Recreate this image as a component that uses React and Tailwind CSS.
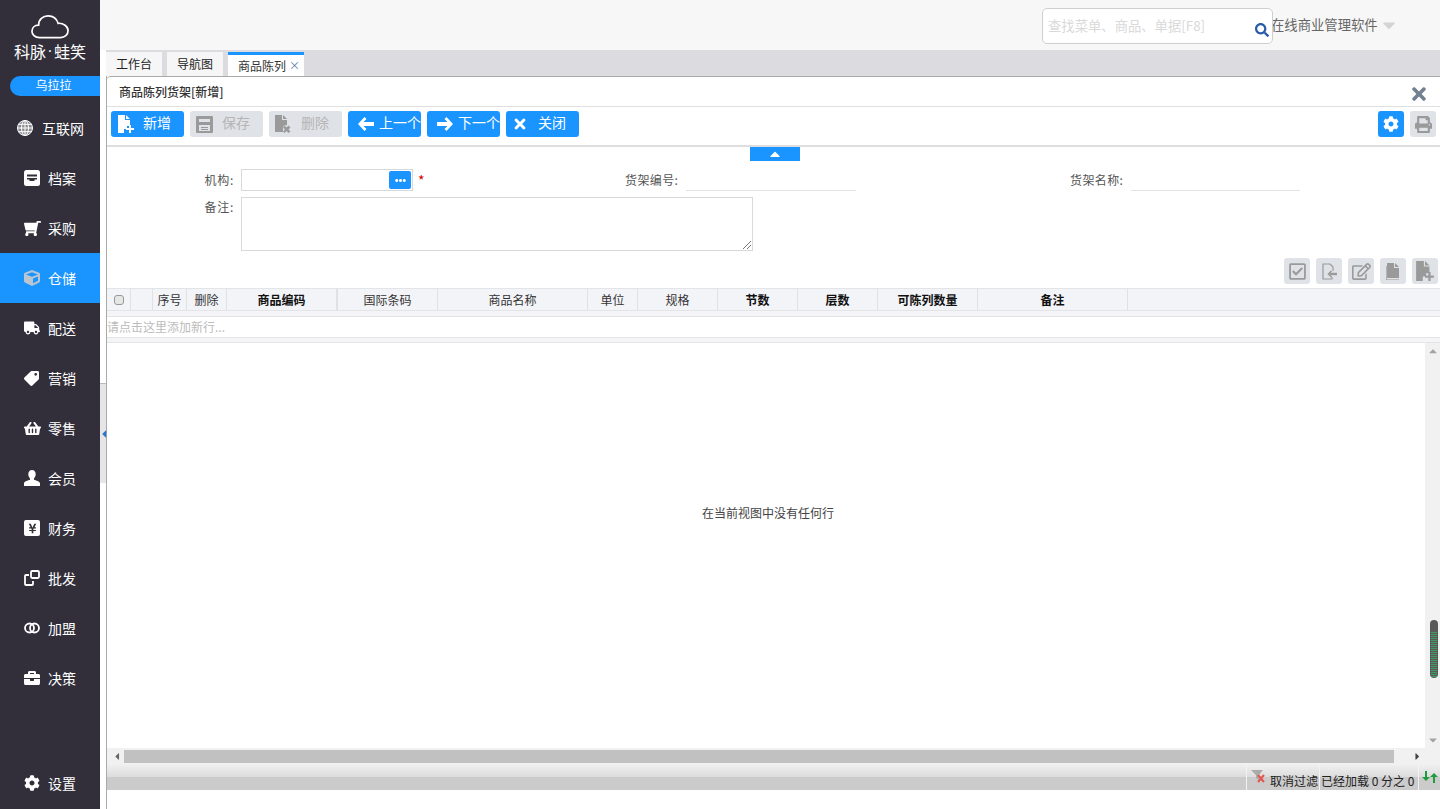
import React from "react";
import {
  FaShoppingCart, FaCube, FaTruck, FaTag, FaShoppingBasket, FaCog,
  FaBriefcase, FaTimes, FaPrint, FaRegCheckSquare, FaEllipsisH,
  FaRegEdit, FaSearch, FaYenSign, FaCaretDown, FaCaretUp, FaCaretLeft, FaCaretRight,
} from "react-icons/fa";

const font = { fontFamily: '"Noto Sans CJK SC", "Liberation Sans", sans-serif' };

const FilePlus = ({ color = "currentColor", size = 18 }) => (
  <svg width={size} height={size} viewBox="0 0 18 18" fill={color}>
    <path d="M1 0h7v5h5v6h-3v3H7v4H1z" />
    <path d="M9 0l4 4H9z" />
    <path d="M12 10h2v3h3v2h-3v3h-2v-3H9v-2h3z" />
  </svg>
);

const FileX = ({ color = "currentColor", size = 18 }) => (
  <svg width={size} height={size} viewBox="0 0 18 18" fill={color}>
    <path d="M1 0h7v5h5v5l-4 1v6H1z" />
    <path d="M9 0l4 4H9z" />
    <path d="M10.5 10.5l2 2 2-2 2 2-2 2 2 2-2 1.5-2-2-2 2-1.5-1.5 2-2-2-2z" />
  </svg>
);

const SaveIcon = () => (
  <svg width="17" height="17" viewBox="0 0 17 17" fill="#9a9a9a">
    <path fillRule="evenodd" d="M1 0h15a1 1 0 0 1 1 1v15a1 1 0 0 1-1 1H1a1 1 0 0 1-1-1V1a1 1 0 0 1 1-1zM3 3v3h11V3zM3 9v6h11V9z" />
    <path d="M5 11h7v1H5zM5 13h7v1H5z" />
  </svg>
);

const Arrow = ({ flip }) => (
  <svg width="16" height="14" viewBox="0 0 16 14" fill="#fff" className={flip ? "-scale-x-100" : ""}>
    <path d="M0 7l6.500-7 2 2L5.500 5H16v4H5.500l3 3-2 2z" />
  </svg>
);

const FileCopy = () => (
  <svg width="14" height="17" viewBox="0 0 14 17" fill="#9a9a9a">
    <path d="M1 0h7v5h5v10H1z" />
    <path d="M9 0l4 4H9z" />
    <path d="M0 3h.6v13.4H13v.6H0z" />
  </svg>
);

const FileBack = () => (
  <svg width="17" height="17" viewBox="0 0 17 17" fill="none" stroke="#9a9a9a" strokeWidth="1.2">
    <path d="M9 1H2v15h9v-2" />
    <path d="M9 1l3 3v4" />
    <path d="M16 11H9" strokeWidth="2.4" />
    <path d="M10.5 8l-3 3 3 3" strokeWidth="1.6" />
  </svg>
);

const CloudLogo = () => (
  <svg width="38" height="24" viewBox="0 0 40 26" fill="none" stroke="#fff" strokeWidth="1.8" preserveAspectRatio="none">
    <path d="M9 24.500C4 24.500 1 21 1 17.500C1 13.500 4 11 8 11C8 5 12.500 1 18 1C23 1 27 4 28.500 9C34 8.500 39 12.500 39 17C39 21.500 35.500 24.500 31 24.500Z" />
  </svg>
);

const GlobeIcon = () => (
  <svg width="16" height="16" viewBox="0 0 16 16" fill="none" stroke="#fff" strokeWidth="1">
    <circle cx="8" cy="8" r="7.500" fill="#8d8b92" />
    <ellipse cx="8" cy="8" rx="3.500" ry="7.500" />
    <path d="M8 0v16M.5 8h15M1.500 4.300h13M1.500 11.700h13" />
  </svg>
);

const UserIcon = () => (
  <svg width="16" height="16" viewBox="0 0 16 16" fill="#fff">
    <path d="M8 0c2.300 0 3.700 1.800 3.700 4.200 0 1.700-.7 3.200-1.700 4.200v1.300c1.800.7 6 1.400 6 3.800V16H0v-2.500c0-2.400 4.200-3.100 6-3.800V8.400C5 7.400 4.300 5.900 4.300 4.200 4.300 1.800 5.700 0 8 0z" />
  </svg>
);

const navItems = [
  { label: "档案", icon: <svg width="16" height="16" viewBox="0 0 16 16"><rect width="16" height="16" rx="2.500" fill="#fff" /><path d="M3 4.500h10v2H3zM3 8h10v1.500h-2.500V11h-5V9.500H3z" fill="#322f3b" /></svg> },
  { label: "采购", icon: <FaShoppingCart size={17} className="-scale-x-100" /> },
  { label: "仓储", icon: <FaCube size={16} className="text-[#b9c6d2]" />, active: true },
  { label: "配送", icon: <FaTruck size={16} /> },
  { label: "营销", icon: <FaTag size={15} className="-scale-x-100" /> },
  { label: "零售", icon: <FaShoppingBasket size={17} /> },
  { label: "会员", icon: <UserIcon /> },
  { label: "财务", icon: <span className="flex h-4 w-4 items-center justify-center rounded-[2px] bg-white text-[#322f3b]"><FaYenSign size={11} /></span> },
  { label: "批发", icon: <svg width="16" height="16" viewBox="0 0 16 16" fill="none" stroke="#fff" strokeWidth="1.800"><rect x="7" y="1" width="8" height="7" rx="1.200" /><path d="M5 5H2a1 1 0 0 0-1 1v8a1 1 0 0 0 1 1h6a1 1 0 0 0 1-1v-3" /></svg> },
  { label: "加盟", icon: <svg width="16" height="12" viewBox="0 0 16 12" fill="none" stroke="#fff" strokeWidth="1.800"><circle cx="5.500" cy="6" r="4.500" /><circle cx="10.500" cy="6" r="4.500" /></svg> },
  { label: "决策", icon: <FaBriefcase size={16} /> },
];

const columns = [
  { w: "w-[24px]", check: true },
  { w: "w-[22px]" },
  { w: "w-[34px]", label: "序号" },
  { w: "w-[40px]", label: "删除" },
  { w: "w-[111px]", label: "商品编码", bold: true, thick: true },
  { w: "w-[100px]", label: "国际条码" },
  { w: "w-[150px]", label: "商品名称" },
  { w: "w-[50px]", label: "单位" },
  { w: "w-[80px]", label: "规格" },
  { w: "w-[80px]", label: "节数", bold: true },
  { w: "w-[80px]", label: "层数", bold: true },
  { w: "w-[100px]", label: "可陈列数量", bold: true },
  { w: "w-[150px]", label: "备注", bold: true },
];

function NavRow({ item }) {
  return (
    <div className={`flex h-[50px] items-center pl-6 text-[14px] text-white ${item.active ? "bg-[#1a94ff]" : ""}`}>
      <span className="flex w-[24px] shrink-0 justify-start">{item.icon}</span>
      <span>{item.label}</span>
    </div>
  );
}

function ToolButton({ icon, label, gap = "gap-[8px]", pl = "pl-[4px]", disabled }) {
  return (
    <div className={`flex h-[26px] w-[73px] items-center overflow-hidden whitespace-nowrap rounded-[3px] text-[14px] ${pl} ${gap} ${disabled ? "bg-[#dfe2e6] text-[#b5b5b5]" : "bg-[#1a94ff] text-white"}`}>
      <span className="flex w-[20px] shrink-0 justify-center">{icon}</span>
      <span className="pb-[3px]">{label}</span>
    </div>
  );
}

function GridTool({ children }) {
  return <div className="flex h-[26px] w-[26px] items-center justify-center rounded-[3px] bg-[#dfe2e6] text-[#9a9a9a]">{children}</div>;
}

export default function App() {
  return (
    <div className="flex h-[809px] w-[1440px] overflow-hidden bg-white text-[12px] text-[#333]" style={font}>
      <aside className="flex w-[100px] shrink-0 flex-col bg-[#322f3b]">
        <div className="flex h-[76px] flex-col items-center pt-[15px]">
          <CloudLogo />
          <div className="mt-[2px] flex items-center text-[16px] leading-[20px] text-white">
            <span>科脉</span>
            <span className="w-[8px] text-center" style={{ fontFamily: '"Liberation Sans", sans-serif' }}>·</span>
            <span>蛙笑</span>
          </div>
        </div>
        <div className="ml-[10px] flex h-[20px] items-center justify-center rounded-l-full bg-[#1a94ff] pb-[3px] pr-[3px] text-[12px] text-white">乌拉拉</div>
        <div className="mt-[7px] flex h-[50px] items-center pl-[17px] text-[14px] text-white">
          <span className="mr-[9px]"><GlobeIcon /></span>
          <span>互联网</span>
        </div>
        {navItems.map((item) => <NavRow key={item.label} item={item} />)}
        <div className="mt-auto pb-[1px]"><NavRow item={{ label: "设置", icon: <FaCog size={16} /> }} /></div>
      </aside>

      <div className="flex min-w-0 flex-1 flex-col">
        <header className="flex h-[50px] shrink-0 items-start bg-[#f7f7f7]">
          <div className="relative z-10 ml-[942px] mt-[8px] flex h-[36px] w-[231px] shrink-0 items-center justify-between rounded-[5px] border border-[#cfcfcf] bg-white pl-[5px] pr-[3px] text-[13.33px] text-[#d9d9d9]">
            <span className="whitespace-nowrap">查找菜单、商品、单据[F8]</span>
            <FaSearch size={14} className="mt-[8px] text-[#2b5aa8]" />
          </div>
          <div className="ml-[-2px] flex h-[50px] items-center overflow-hidden whitespace-nowrap text-[13.33px] text-[#666]">
            <span>在线商业管理软件</span>
            <FaCaretDown size={20} className="ml-[1px] text-[#d4d4d4]" />
          </div>
        </header>

        <div className="flex min-h-0 flex-1">
          <div className="w-[6px] shrink-0 pt-[333px]">
            <div className="relative h-[100px] border-t border-[#bbb] bg-[#e6e6e6]">
              <FaCaretLeft size={12} className="absolute left-[-2px] top-[44px] text-[#2e74c8]" />
            </div>
          </div>

          <div className="flex min-w-0 flex-1 flex-col">
            <nav className="flex h-[26px] shrink-0 items-end gap-[5px] bg-[#dcdce0]">
              <div className="flex h-[24px] w-[56px] items-center justify-center bg-[#f6f6f6] text-[#222]">工作台</div>
              <div className="flex h-[24px] w-[56px] items-center justify-center bg-[#f6f6f6] text-[#222]">导航图</div>
              <div className="flex h-[24px] w-[76px] items-center gap-[3px] border-t-[3px] border-[#1a94ff] bg-white pl-[10px] text-[#333]">
                <span>商品陈列</span>
                <span className="text-[11px] leading-none text-[#5b7ba8]">×</span>
              </div>
            </nav>

            <div className="flex h-[733px] flex-col border-l border-[#aaa]">
              <main className="flex h-[689px] shrink-0 flex-col rounded-tl-[4px] border-t border-[#a9a9a9] bg-white">
                <div className="flex h-[30px] shrink-0 items-center justify-between border-b border-[#e0e0e0] pl-[12px] pr-[11px]">
                  <span className="text-[12px] font-medium text-[#333]">商品陈列货架[新增]</span>
                  <FaTimes size={20} className="mt-[5px] text-[#72808f]" />
                </div>

                <div className="flex h-[40px] shrink-0 items-start justify-between border-b-2 border-[#dedede] pl-[4px] pr-[4px] pt-[4px]">
                  <div className="flex gap-[6px]">
                    <ToolButton icon={<FilePlus color="#fff" />} label="新增" pl="pl-[5px]" gap="gap-[7px]" />
                    <ToolButton icon={<SaveIcon />} label="保存" disabled />
                    <ToolButton icon={<FileX color="#9a9a9a" />} label="删除" disabled />
                    <ToolButton icon={<Arrow />} label="上一个" gap="gap-[3px]" pl="pl-[8px]" />
                    <ToolButton icon={<Arrow flip />} label="下一个" gap="gap-[3px]" pl="pl-[8px]" />
                    <ToolButton icon={<FaTimes size={16} />} label="关闭" />
                  </div>
                  <div className="flex gap-[6px]">
                    <div className="flex h-[26px] w-[26px] items-center justify-center rounded-[3px] bg-[#1a94ff] text-white"><FaCog size={16} /></div>
                    <div className="flex h-[26px] w-[26px] items-center justify-center rounded-[3px] bg-[#dfe2e6] text-[#999]"><FaPrint size={17} /></div>
                  </div>
                </div>

                <div className="relative h-[111px] shrink-0">
                  <div className="absolute left-[643px] top-0 flex h-[14px] w-[50px] items-center justify-center bg-[#1a94ff] text-white"><FaCaretUp size={16} /></div>
                  <div className="grid grid-cols-[127px_172px_1fr] gap-x-[7px] gap-y-[6px] pt-[22px]">
                    <div className="pt-[2px] text-right tracking-[0.7px] text-[#555]">机构:</div>
                    <div className="flex h-[22px] items-center justify-end border border-[#d9d9d9] pr-[1px]">
                      <div className="flex h-[18px] w-[22px] items-center justify-center rounded-[2px] bg-[#1a94ff] text-white"><FaEllipsisH size={11} /></div>
                    </div>
                    <div className="flex h-[22px] text-[#555]">
                      <span className="ml-[-2px] w-[207px] shrink-0 pt-[1px] text-[14px] text-[#d40000]">*</span>
                      <span className="w-[53px] shrink-0 whitespace-nowrap pt-[2px] tracking-[0.4px]">货架编号:</span>
                      <div className="ml-[8px] h-[22px] w-[170px] shrink-0 border-b border-[#e2e2e2]" />
                      <span className="ml-[214px] w-[53px] shrink-0 whitespace-nowrap pt-[2px] tracking-[0.4px]">货架名称:</span>
                      <div className="ml-[8px] h-[22px] w-[169px] shrink-0 border-b border-[#e2e2e2]" />
                    </div>
                    <div className="pt-[1px] text-right tracking-[0.7px] text-[#555]">备注:</div>
                    <div className="relative col-span-2 h-[54px] w-[512px] border border-[#d9d9d9]">
                      <svg className="absolute bottom-[1px] right-[1px]" width="8" height="8" viewBox="0 0 8 8" stroke="#777" fill="none"><path d="M8 0L0 8M8 4L4 8" /></svg>
                    </div>
                  </div>
                </div>

                <div className="flex h-[26px] shrink-0 justify-end gap-[6px] pr-[2px]">
                  <GridTool><FaRegCheckSquare size={19} /></GridTool>
                  <GridTool><FileBack /></GridTool>
                  <GridTool><FaRegEdit size={19} /></GridTool>
                  <GridTool><FileCopy /></GridTool>
                  <GridTool><FilePlus size={20} /></GridTool>
                </div>

                <div className="mt-[4px] flex h-[23px] shrink-0 border-y border-[#e3e4e8] bg-[#f3f4f8]">
                  {columns.map((c, i) => (
                    <div
                      key={i}
                      className={`flex shrink-0 items-center justify-center border-r border-[#e0e1e5] ${c.w} ${c.bold ? "font-bold text-[#111]" : "text-[#333]"} ${c.thick ? "border-r-2" : ""}`}
                    >
                      {c.check && <span className="h-[10px] w-[10px] rounded-[3px] border border-[#999] bg-[#e6e6e6]" />}
                      {c.label}
                    </div>
                  ))}
                </div>
                <div className="h-[5px] shrink-0 bg-[#f5f5f7]" />
                <div className="flex h-[22px] shrink-0 items-center border-y border-[#e3e4e8] text-[#bcbcbc]">请点击这里添加新行...</div>
                <div className="h-[5px] shrink-0 border-b border-[#e3e4e8] bg-[#f5f5f7]" />

                <div className="flex min-h-0 flex-1">
                  <div className="flex flex-1 items-center justify-center pb-[66px] pl-[4px] text-[#444]">在当前视图中没有任何行</div>
                  <div className="relative flex w-[15px] shrink-0 flex-col items-center bg-[#f1f1f1]">
                    <FaCaretUp size={12} className="mt-[2px] text-[#a3a3a3]" />
                    <div className="absolute left-[5px] top-[277px] h-[58px] w-[8px] rounded-full bg-[#595959] px-[1px] pb-[1px] pt-[12px]">
                      <div className="h-full w-full bg-[repeating-linear-gradient(to_bottom,#3c9c63_0,#3c9c63_1px,#595959_1px,#595959_2px)]" />
                    </div>
                    <FaCaretDown size={12} className="mb-[2px] mt-auto text-[#a3a3a3]" />
                  </div>
                </div>

                <div className="flex h-[17px] shrink-0 items-center bg-[#f1f1f1]">
                  <FaCaretLeft size={11} className="ml-[3px] w-[14px] text-[#666]" />
                  <div className="h-[13px] w-[1270px] bg-[#c1c1c1]" />
                  <FaCaretRight size={11} className="ml-[18px] text-[#444]" />
                </div>
              </main>

              <footer className="flex h-[25px] shrink-0 items-stretch justify-end bg-[linear-gradient(to_bottom,#efefef_0,#dcdcdc_48%,#cbcbcb_50%,#cbcbcb_100%)] text-[12px] text-[#222]">
                <div className="flex w-[73px] items-center gap-[3px] border-l border-[#f2f2f2] pl-[4px]">
                  <svg className="mb-[4px] shrink-0" width="16" height="14" viewBox="0 0 16 14">
                    <path d="M0 1h12L8 6v5L5 9V6z" fill="#aaa" />
                    <path d="M7 6l6 7M13 6l-6 7" stroke="#e2574c" strokeWidth="2" />
                  </svg>
                  <span className="whitespace-nowrap pt-[6px]">取消过滤</span>
                </div>
                <div className="flex w-[99px] items-center whitespace-nowrap border-l border-[#f2f2f2] pl-[1px]">
                  <span className="pt-[6px]">已经加载 0 分之 0</span>
                </div>
                <div className="flex w-[22px] items-center justify-center border-l border-[#f2f2f2]">
                  <svg className="mb-[2px]" width="16" height="14" viewBox="0 0 16 14" fill="#1f9a3c">
                    <path d="M3 1h2v6h3l-4 4-4-4h3z" />
                    <path d="M12 3l4 4h-3v6h-2V7H8z" />
                  </svg>
                </div>
              </footer>
            </div>
          </div>
        </div>
      </div>
    </div>
  );
}
